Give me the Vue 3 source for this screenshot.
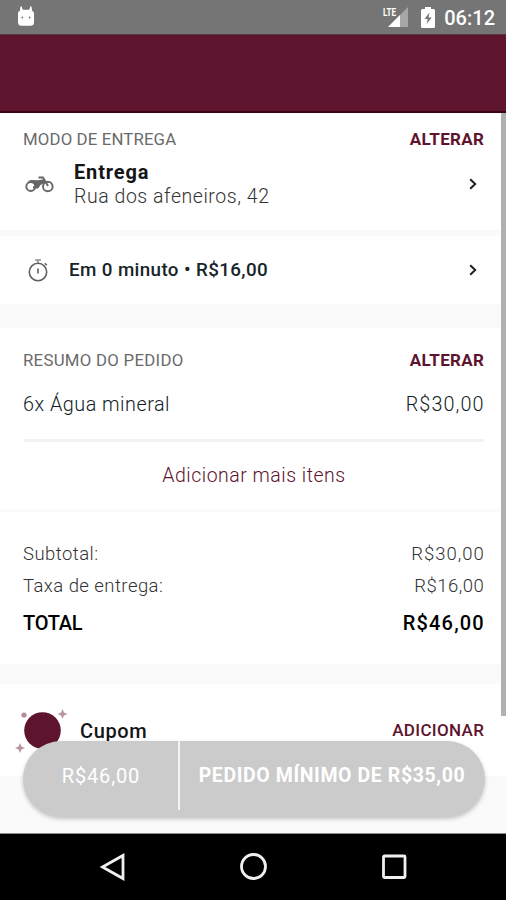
<script setup>
const totals = [
  { label: 'Subtotal:', value: 'R$30,00', kind: 'sub' },
  { label: 'Taxa de entrega:', value: 'R$16,00', kind: 'fee' },
]
</script>

<template>
  <div class="phone">
    <header class="status">
      <svg class="bot" viewBox="0 0 18 21" width="18" height="21">
        <path d="M3.500 0.500h1.200l1 3.200h6.600L13.300.5h1.200l.6 4.300q1.900.7 1.900 2.400v9q0 3.600-3.600 3.600H4.600Q1 19.800 1 16.200v-9q0-1.700 1.900-2.400z" fill="#fff" />
        <circle cx="5.300" cy="11.500" r=".9" fill="#757575" /><circle cx="12.600" cy="11.500" r=".9" fill="#757575" />
      </svg>
      <div class="signals">
        <svg class="lte" viewBox="0 0 26 22" width="26" height="22">
          <path d="M25 1v20H5z" fill="#a6a6a6" /><path d="M17 9v12H5z" fill="#fff" />
          <text x="0" y="10" class="ltetext" textLength="13" lengthAdjust="spacingAndGlyphs">LTE</text>
        </svg>
        <svg class="bat" viewBox="0 0 14 21" width="14" height="21">
          <path d="M4 0h6v2h2.500Q14 2 14 3.500v16q0 1.500-1.500 1.500h-11Q0 21 0 19.500v-16Q0 2 1.500 2H4z" fill="#fff" />
          <path d="M8.500 5.500L3.500 12h3.200l-1 5L10.700 10.500H7.500z" fill="#757575" />
        </svg>
        <span class="clock">06:12</span>
      </div>
    </header>
    <div class="appbar"></div>

    <main class="content">
      <section class="delivery">
        <div class="line"><h2 class="caption modo">MODO DE ENTREGA</h2><a class="action">ALTERAR</a></div>
        <div class="address">
          <svg class="moto" viewBox="0 0 30 18" width="30" height="18" fill="none" stroke="#666" stroke-width="1.900">
            <circle cx="5.800" cy="11.500" r="4.500" /><circle cx="22.800" cy="11.500" r="4.800" />
            <path d="M13.500 2.500h4.500L23 11" />
            <path d="M2.500 6.300L6 5l7.500.2 5.500-1 1.500 3-5 2.700-2.500 3.600H8v-2.200h2.200L8.500 8.200z" fill="#666" stroke="none" />
          </svg>
          <div class="where"><span class="name">Entrega</span><span class="street">Rua dos afeneiros, 42</span></div>
          <svg class="chev" viewBox="0 0 8 12" width="8" height="12"><path d="M1.200 1.200L6.200 6l-5 4.800" /></svg>
        </div>
      </section>

      <section class="time">
        <svg class="watch" viewBox="0 0 20 24" width="20" height="24" fill="none" stroke="#606060" stroke-width="1.600">
          <circle cx="10" cy="14" r="8.700" /><path d="M10 10.500v5" /><path d="M7 2h6M10 2v3" stroke="#909090" /><path d="M16.800 5.300l2 2" />
        </svg>
        <span class="eta">Em 0 minuto • R$16,00</span>
        <svg class="chev" viewBox="0 0 8 12" width="8" height="12"><path d="M1.200 1.200L6.200 6l-5 4.800" /></svg>
      </section>

      <section class="order">
        <div class="line"><h2 class="caption resumo">RESUMO DO PEDIDO</h2><a class="action">ALTERAR</a></div>
        <div class="line item"><span class="product">6x Água mineral</span><span class="price">R$30,00</span></div>
        <div class="more"><a class="add">Adicionar mais itens</a></div>
      </section>

      <section class="totals">
        <div v-for="r in totals" :key="r.kind" class="line row" :class="r.kind">
          <span class="rowlabel">{{ r.label }}</span><span class="rowvalue">{{ r.value }}</span>
        </div>
        <div class="line grand"><span class="grandlabel">TOTAL</span><span class="grandvalue">R$46,00</span></div>
      </section>

      <section class="coupon">
        <svg class="badge" viewBox="0 0 54 46" width="54" height="46">
          <circle cx="27.500" cy="22.500" r="18.300" fill="#5e132e" /><circle cx="9" cy="7" r="2.600" fill="#b58a99" />
          <path d="M47.500 1l1.500 3.500 3.500 1.500-3.500 1.500-1.500 3.500-1.500-3.500-3.500-1.500 3.500-1.500zM5 35l1.500 3.500 3.500 1.500-3.500 1.500L5 45l-1.500-3.500L0 40l3.500-1.500z" fill="#b995a3" />
        </svg>
        <span class="cupom">Cupom</span><a class="apply">ADICIONAR</a>
      </section>
      <div class="thumb"></div>
      <button class="checkout"><span class="sum"><span class="sumtext">R$46,00</span></span><span class="min"><span class="mintext">PEDIDO MÍNIMO DE R$35,00</span></span></button>
    </main>

    <nav class="nav">
      <svg viewBox="0 0 28 28" width="28" height="28"><path d="M24 2.500v23L3.500 14z" /></svg>
      <svg viewBox="0 0 28 28" width="28" height="28"><circle cx="13.500" cy="13.500" r="12" /></svg>
      <svg viewBox="0 0 28 28" width="28" height="28"><rect x="3.500" y="3" width="21.500" height="21.500" rx="1" /></svg>
    </nav>
  </div>
</template>

<style>
body { margin: 0; background: #000; }
</style>
<style scoped>
* { box-sizing: border-box; }
.phone { width: 506px; height: 900px; display: flex; flex-direction: column; overflow: hidden; font-family: Roboto, sans-serif; color: #151515; }
span, a, h2 { white-space: nowrap; }
.status { height: 34px; background: #757575; display: flex; align-items: center; justify-content: space-between; padding: 0 11px 0 17px; }
.bot { margin-top: -2px; }
.signals { display: flex; align-items: center; }
.lte { margin-right: 12px; }
.ltetext { font: 700 11px Roboto, sans-serif; fill: #fff; }
.bat { margin-right: 9px; }
.clock { font-size: 20px; font-weight: 500; color: #fff; line-height: 24px; padding-top: 2px; }
.appbar { height: 79px; background: #5e132e; border-top: 1px solid #5a3542; border-bottom: 2px solid #3a0312; }
.content { position: relative; flex: 1; background: #fafafa; border-bottom: 1px solid #8a8a8a; }
section { background: #fff; padding: 0 22px 0 23px; }
h2 { margin: 0; }
.line { display: flex; align-items: center; justify-content: space-between; }
.caption { font-size: 16.800px; font-weight: 400; line-height: 20px; color: #6a6a6a; }
.modo { letter-spacing: .14px; }
.resumo { letter-spacing: .28px; }
.action, .apply { font-size: 17px; font-weight: 700; line-height: 20px; color: #5e132e; letter-spacing: .35px; margin-right: -.3px; }
.delivery { height: 117px; padding-top: 16px; }
.address { display: flex; align-items: center; margin-top: 11px; height: 48px; }
.moto { margin-left: 2px; }
.where { flex: 1; display: flex; flex-direction: column; align-items: flex-start; margin-left: 19px; }
.name { font-size: 20px; font-weight: 700; line-height: 24px; letter-spacing: .85px; }
.street { font-size: 19.500px; font-weight: 300; line-height: 26px; margin-bottom: -2px; color: #333; letter-spacing: .55px; }
.chev { margin-right: 7px; fill: none; stroke: #202020; stroke-width: 2; }
.time { margin-top: 6px; height: 68px; display: flex; align-items: center; }
.watch { margin-left: 5px; }
.eta { flex: 1; margin-left: 21px; font-size: 18.800px; font-weight: 500; line-height: 24px; color: #17252b; letter-spacing: .38px; }
.order { margin-top: 24px; height: 181px; padding-top: 22px; }
.item { margin-top: 21px; height: 28px; }
.product, .price { font-size: 19.800px; font-weight: 300; line-height: 24px; color: #101d25; }
.product { letter-spacing: .5px; }
.price { letter-spacing: 1.100px; margin-right: -.6px; }
.more { border-top: 3px solid #f1f1f1; margin: 20px 0 0 1px; padding-top: 21px; text-align: center; }
.add { font-size: 19.500px; line-height: 26px; color: #5e132e; font-weight: 300; letter-spacing: .5px; }
.totals { margin-top: 3px; height: 152px; padding-top: 26px; }
.row { height: 32px; }
.rowlabel, .rowvalue { font-size: 18.500px; font-weight: 300; line-height: 24px; color: #333; }
.rowlabel { letter-spacing: .45px; }
.rowvalue { letter-spacing: .95px; margin-right: -.6px; }
.fee .rowvalue { letter-spacing: .45px; margin-right: -.1px; }
.grand { height: 41px; }
.grandlabel, .grandvalue { font-size: 20px; font-weight: 500; line-height: 24px; color: #000; }
.grandlabel { letter-spacing: -.25px; }
.grandvalue { letter-spacing: 1.150px; margin-right: -.8px; }
.coupon { margin-top: 20px; height: 92px; display: flex; align-items: flex-start; padding-left: 15px; padding-top: 24px; }
.cupom { flex: 1; margin-left: 11px; font-size: 20px; font-weight: 500; line-height: 46px; letter-spacing: .6px; }
.apply { line-height: 44px; font-weight: 500; letter-spacing: .35px; margin-right: -.3px; }
.thumb { position: absolute; top: 0; right: 0; width: 5px; height: 603px; background: #b0b0b0; }
.checkout { position: absolute; left: 23px; top: 628px; width: 462px; height: 76px; border: 0; border-radius: 38px; background: #cbcbcb; padding: 0; display: flex; font-family: inherit; color: #fff; box-shadow: 0 2px 4px rgba(0,0,0,.22); }
.sum { width: 157px; height: 69px; border-right: 2px solid #f4f4f4; display: flex; justify-content: center; align-items: center; }
.min { flex: 1; height: 69px; display: flex; justify-content: center; align-items: center; }
.sumtext { font-size: 20px; letter-spacing: .85px; margin-right: -.85px; }
.mintext { font-size: 19.500px; font-weight: 700; letter-spacing: .6px; margin-right: 1px; }
.nav { height: 66px; background: #000; display: flex; justify-content: space-between; align-items: center; padding: 0 98px 0 99px; }
.nav svg { fill: none; stroke: #f0f0f0; stroke-width: 2.800; }
</style>
